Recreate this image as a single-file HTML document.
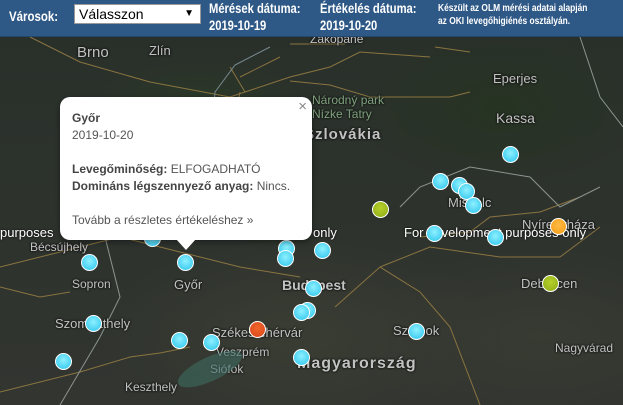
<!DOCTYPE html>
<html><head><meta charset="utf-8"><style>
*{margin:0;padding:0;box-sizing:border-box}
body{width:623px;height:405px;overflow:hidden;font-family:"Liberation Sans",sans-serif;position:relative;background:#2c3129}
#map{position:absolute;left:0;top:37px;width:623px;height:368px;
background:
radial-gradient(ellipse 120px 60px at 200px 80px,#2a3a26 0%,transparent 100%),
radial-gradient(ellipse 150px 80px at 500px 70px,#263322 0%,transparent 100%),
radial-gradient(ellipse 200px 100px at 300px 300px,#3a3d33 0%,transparent 100%),
radial-gradient(ellipse 180px 90px at 540px 300px,#383b32 0%,transparent 100%),
linear-gradient(#29302a,#323530)}
#hdr{position:absolute;left:0;top:0;width:623px;height:37px;background:#2e5886;color:#fff;border-bottom:1px solid #24466c}
.t{position:absolute;font-family:"Liberation Sans",sans-serif;font-weight:bold;color:#fff;transform-origin:0 0;white-space:nowrap}
.lbl{position:absolute;color:#c2c2c2;font-size:12px;text-shadow:0 0 2px #111,0 0 2px #111;white-space:nowrap}
.big{font-weight:bold;font-size:15px;letter-spacing:1px}
.dev{position:absolute;color:#fff;font-size:13px;text-shadow:0 0 2px #000;white-space:nowrap}
.m{position:absolute;width:17px;height:17px;border-radius:50%;border:1.5px solid #fff;background:radial-gradient(circle at 50% 40%,#8ef0ff,#28c3ec);margin:-8px 0 0 -8px}
.o{background:radial-gradient(circle at 50% 40%,#ffbb44,#f29a14)}
.r{background:radial-gradient(circle at 50% 40%,#f0662a,#d9441a)}
.g{background:radial-gradient(circle at 50% 40%,#b6cf2a,#8dab16)}
#pop{position:absolute;left:60px;top:97px;width:252px;height:143px;background:#fff;border-radius:10px;box-shadow:0 2px 6px rgba(0,0,0,.4);color:#555;font-size:12px;padding:13px 12px}
#pop b{color:#444}
#arr{position:absolute;left:176px;top:239px;width:0;height:0;border-left:10px solid transparent;border-right:10px solid transparent;border-top:11px solid #fff}
#x{position:absolute;right:5px;top:1px;font-size:15px;color:#888}
</style></head><body>
<div id="map">
<svg width="623" height="368" style="position:absolute;left:0;top:0" fill="none" stroke-width="1">
<path d="M30 0 L80 25 L150 45 L230 60 L290 40 L330 30 L360 15 L430 20" stroke="#8a7440"/>
<path d="M240 55 L235 80 L225 120" stroke="#8a7440"/>
<path d="M240 40 L280 20 M230 30 L245 55" stroke="#8a7440"/>
<path d="M290 7 L345 7 M435 10 L470 15" stroke="#8a7440"/>
<path d="M290 44 L330 48 L370 60 L450 60 L470 55" stroke="#8a7440"/>
<path d="M210 110 L215 55 L235 28 L270 10" stroke="#7a8a90"/>
<path d="M0 355 L40 345 L80 335 L130 320 L160 316 L190 310" stroke="#8a7440"/>
<path d="M0 230 L60 215 L120 200 L180 215 L240 230 L300 240" stroke="#8a7440"/>
<path d="M380 230 L420 255 L450 290 L480 368" stroke="#8a7440"/>
<path d="M335 270 L380 230 L430 210 L500 220 L560 220 L600 190" stroke="#8a7440"/>
<path d="M420 200 L470 195 L490 180 L540 175 L580 160" stroke="#8a7440"/>
<path d="M0 250 L40 260 L70 255" stroke="#8a7440"/>
<path d="M400 170 L420 150 L470 130 L530 140 L560 170 L600 150" stroke="#8c9490"/>
<path d="M580 0 L600 60 L623 90" stroke="#8c9490"/>
<path d="M100 180 L120 260 L100 300 L60 368" stroke="#8c9490"/>
</svg>
<div class="lbl" style="left:77px;top:7px;font-size:15px">Brno</div>
<div class="lbl" style="left:149px;top:6px;font-size:13px">Zlín</div>
<div class="lbl" style="left:310px;top:-5px">Zakopane</div>
<div class="lbl" style="left:493px;top:34px;font-size:13px">Eperjes</div>
<div class="lbl" style="left:312px;top:56px;color:#7fa17d">Národný park</div>
<div class="lbl" style="left:312px;top:70px;color:#7fa17d">Nízke Tatry</div>
<div class="lbl big" style="left:304px;top:89px">Szlovákia</div>
<div class="lbl" style="left:496px;top:73px;font-size:14px">Kassa</div>
<div class="lbl" style="left:448px;top:158px;font-size:13px">Miskolc</div>
<div class="lbl" style="left:522px;top:180px;font-size:13px">Nyíregyháza</div>
<div class="lbl" style="left:521px;top:239px;font-size:13px">Debrecen</div>
<div class="lbl" style="left:30px;top:203px">Bécsújhely</div>
<div class="lbl" style="left:72px;top:240px">Sopron</div>
<div class="lbl" style="left:174px;top:240px;font-size:13px">Győr</div>
<div class="lbl" style="left:282px;top:240px;font-size:14px;font-weight:bold">Budapest</div>
<div class="lbl" style="left:55px;top:279px;font-size:13px">Szombathely</div>
<div class="lbl" style="left:212px;top:288px;font-size:13px">Székesfehérvár</div>
<div class="lbl" style="left:216px;top:308px">Veszprém</div>
<div class="lbl" style="left:210px;top:325px">Siófok</div>
<div class="lbl" style="left:125px;top:343px">Keszthely</div>
<div class="lbl" style="left:393px;top:286px;font-size:13px">Szolnok</div>
<div class="lbl" style="left:555px;top:304px">Nagyvárad</div>
<div class="lbl big" style="left:297px;top:318px;font-size:16px">Magyarország</div>
<div style="position:absolute;left:175px;top:320px;width:70px;height:24px;background:#3d6b60;opacity:.6;border-radius:50%;transform:rotate(-25deg)"></div>
<div class="dev" style="left:0;top:188px">purposes</div>
<div class="dev" style="left:313px;top:188px">only</div>
<div class="dev" style="left:404px;top:188px">For development purposes only</div>
</div>
<div id="hdr">
<div class="t" style="left:9px;top:8px;font-size:14px;transform:scaleX(.82)">Városok:</div>
<div style="position:absolute;left:74px;top:4px;width:127px;height:20px;background:#fff;border:1px solid #999;color:#000;font-size:14px;padding:1px 4px;font-family:'Liberation Sans',sans-serif">Válasszon<span style="position:absolute;right:6px;top:3px;font-size:10px">▼</span></div>
<div class="t" style="left:209px;top:0px;font-size:14px;line-height:17px;transform:scaleX(.8)">Mérések dátuma:<br>2019-10-19</div>
<div class="t" style="left:320px;top:0px;font-size:14px;line-height:17px;transform:scaleX(.8)">Értékelés dátuma:<br>2019-10-20</div>
<div class="t" style="left:438px;top:2px;font-size:10px;line-height:13px;transform:scaleX(.84)">Készült az OLM mérési adatai alapján<br>az OKI levegőhigiénés osztályán.</div>
</div>
<div class="m" style="left:510px;top:154px"></div>
<div class="m" style="left:440px;top:181px"></div>
<div class="m" style="left:459px;top:185px"></div>
<div class="m" style="left:466px;top:191px"></div>
<div class="m" style="left:473px;top:205px"></div>
<div class="m" style="left:434px;top:233px"></div>
<div class="m" style="left:495px;top:237px"></div>
<div class="m" style="left:152px;top:238px"></div>
<div class="m" style="left:89px;top:262px"></div>
<div class="m" style="left:185px;top:262px"></div>
<div class="m" style="left:286px;top:248px"></div>
<div class="m" style="left:285px;top:258px"></div>
<div class="m" style="left:322px;top:250px"></div>
<div class="m" style="left:313px;top:288px"></div>
<div class="m" style="left:307px;top:310px"></div>
<div class="m" style="left:301px;top:312px"></div>
<div class="m" style="left:93px;top:323px"></div>
<div class="m" style="left:179px;top:340px"></div>
<div class="m" style="left:211px;top:342px"></div>
<div class="m" style="left:301px;top:357px"></div>
<div class="m" style="left:416px;top:331px"></div>
<div class="m" style="left:63px;top:361px"></div>
<div class="m o" style="left:558px;top:226px"></div>
<div class="m r" style="left:257px;top:329px"></div>
<div class="m g" style="left:380px;top:209px"></div>
<div class="m g" style="left:550px;top:283px"></div>
<div id="pop">
<span id="x">×</span>
<div style="line-height:17px"><b>Győr</b><br>2019-10-20<br><br><b>Levegőminőség:</b> ELFOGADHATÓ<br><b>Domináns légszennyező anyag:</b> Nincs.<br><br>Tovább a részletes értékeléshez »</div>
</div>
<div id="arr"></div>
</body></html>
